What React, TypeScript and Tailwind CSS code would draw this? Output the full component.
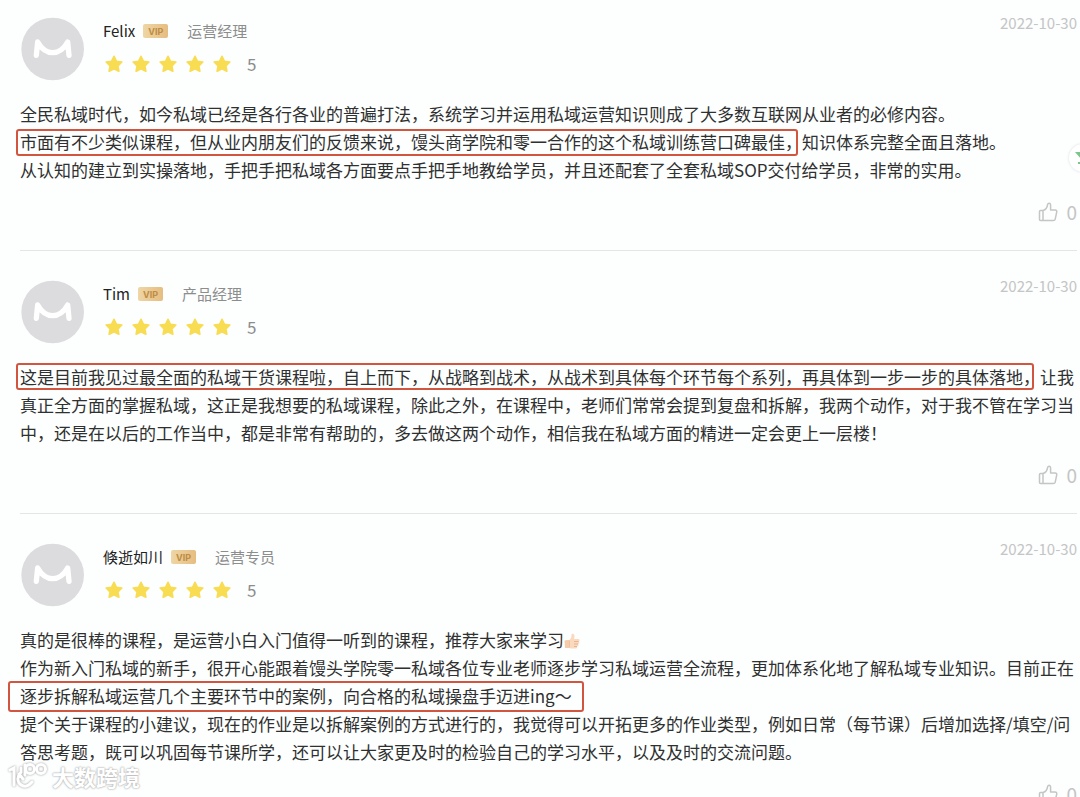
import React from "react";

type Review = {
  name: string;
  role: string;
  date: string;
  score: number;
  likes: number;
  body: React.ReactNode;
};

function Boxed({ edge, children }: { edge: string; children: React.ReactNode }) {
  return (
    <span className="relative">
      {children}
      <span aria-hidden="true" className={`pointer-events-none absolute rounded-[3px] border-2 border-[#d2553f] ${edge}`} />
    </span>
  );
}

function ThumbEmoji() {
  return (
    <svg role="img" aria-label="点赞" viewBox="0 0 32 32" className="inline-block size-4 align-[-2px]">
      <path d="M10 15c4-3 5-7 5-11 0-4 6-3 6 2 0 3-1 5-1 6h8c4 0 4 5 1 5 3 1 2 5-1 5 2 1 1 5-2 5 1 2 0 4-3 4H13l-3-2z" fill="#fad9bd" />
      <path d="M20 17h9M20 22h8M20 27h6" stroke="#dfa987" strokeWidth="1.5" fill="none" />
      <path d="M1 15c4-1 7-1 10-1v16H2z" fill="#f6cba9" />
      <path d="M11 15v14" stroke="#e3b08f" strokeWidth="1" />
    </svg>
  );
}

const reviews: Review[] = [
  {
    name: "Felix",
    role: "运营经理",
    date: "2022-10-30",
    score: 5,
    likes: 0,
    body: (
      <>
        <p>全民私域时代，如今私域已经是各行各业的普遍打法，系统学习并运用私域运营知识则成了大多数互联网从业者的必修内容。</p>
        <p>
          <Boxed edge="top-0 -bottom-0.5 -left-1 right-1">市面有不少类似课程，但从业内朋友们的反馈来说，馒头商学院和零一合作的这个私域训练营口碑最佳，</Boxed>
          知识体系完整全面且落地。
        </p>
        <p>从认知的建立到实操落地，手把手把私域各方面要点手把手地教给学员，并且还配套了全套私域SOP交付给学员，非常的实用。</p>
      </>
    ),
  },
  {
    name: "Tim",
    role: "产品经理",
    date: "2022-10-30",
    score: 5,
    likes: 0,
    body: (
      <p>
        <Boxed edge="-top-px -bottom-px -left-1 right-1.5">这是目前我见过最全面的私域干货课程啦，自上而下，从战略到战术，从战术到具体每个环节每个系列，再具体到一步一步的具体落地，</Boxed>
        让我真正全方面的掌握私域，这正是我想要的私域课程，除此之外，在课程中，老师们常常会提到复盘和拆解，我两个动作，对于我不管在学习当中，还是在以后的工作当中，都是非常有帮助的，多去做这两个动作，相信我在私域方面的精进一定会更上一层楼！
      </p>
    ),
  },
  {
    name: "倏逝如川",
    role: "运营专员",
    date: "2022-10-30",
    score: 5,
    likes: 0,
    body: (
      <>
        <p>
          真的是很棒的课程，是运营小白入门值得一听到的课程，推荐大家来学习
          <ThumbEmoji />
        </p>
        <p>
          作为新入门私域的新手，很开心能跟着馒头学院零一私域各位专业老师逐步学习私域运营全流程，更加体系化地了解私域专业知识。目前正在
          <Boxed edge="-top-0.5 -bottom-1 -left-3 -right-3">逐步拆解私域运营几个主要环节中的案例，向合格的私域操盘手迈进ing～</Boxed>
        </p>
        <p>提个关于课程的小建议，现在的作业是以拆解案例的方式进行的，我觉得可以开拓更多的作业类型，例如日常（每节课）后增加选择/填空/问答思考题，既可以巩固每节课所学，还可以让大家更及时的检验自己的学习水平，以及及时的交流问题。</p>
      </>
    ),
  },
];

function Avatar() {
  return (
    <svg aria-hidden="true" viewBox="0 0 192 192" className="size-16 shrink-0">
      <circle cx="98" cy="96" r="94" fill="#dcdcde" />
      <path
        d="M49 115L53 75Q71 107 98 107T143 75L147 115"
        fill="none"
        stroke="#fff"
        strokeWidth="16"
        strokeLinecap="round"
        strokeLinejoin="round"
      />
    </svg>
  );
}

function Star() {
  return (
    <svg aria-hidden="true" viewBox="0 0 24 24" className="size-5">
      <path
        d="M12 2.8l2.9 5.9 6.5.9-4.7 4.6 1.1 6.5-5.8-3.1-5.8 3.1 1.1-6.5-4.7-4.6 6.5-.9z"
        fill="#f8dc52"
        stroke="#f8dc52"
        strokeWidth="2"
        strokeLinejoin="round"
      />
    </svg>
  );
}

function ThumbIcon() {
  return (
    <svg aria-hidden="true" viewBox="0 0 20 20" className="size-5" fill="none" stroke="currentColor" strokeWidth="1.5" strokeLinejoin="round" strokeLinecap="round">
      <path d="M5 8.5H2.500q-1 0-1 1V17.500q0 1 1 1H15.400q1.400 0 1.800-1.300l1.500-7.100q.4-2.200-1.800-2.200H12.600V3.500q0-2.200-1.500-2.200-1.300 0-1.600 1.600Q9 7.400 5 8.500V18.500" />
    </svg>
  );
}

function ReviewItem({ review }: { review: Review }) {
  return (
    <article className="border-b border-[#e4e5e5] pt-[29px] pb-[26px] first:pt-[17px] last:border-b-0">
      <header className="flex items-start">
        <Avatar />
        <div className="ml-[19px] flex-1">
          <div className="flex h-7 items-center text-[15px] leading-7">
            <h2 className="text-[#222]">{review.name}</h2>
            <span className="mr-[19px] ml-2 flex h-[14px] w-[25px] items-center justify-center rounded-xs bg-linear-to-r from-[#eed6a6] to-[#e6bd80] font-['Inter'] text-[9px] leading-none font-bold text-[#bd8c45]">
              VIP
            </span>
            <span className="text-[#8c8d8d]">{review.role}</span>
          </div>
          <div className="mt-[5px] flex h-7 items-center gap-[7px] pl-px">
            {Array.from({ length: review.score }, (_, i) => (
              <Star key={i} />
            ))}
            <span className="ml-2 text-[17px] text-[#8c8d8d]">{review.score}</span>
          </div>
        </div>
        <time dateTime={review.date} className="text-[15px] leading-3 text-[#c4c5c5]">
          {review.date}
        </time>
      </header>
      <div className="mt-[19px] text-[17px] leading-7 text-[#2f3030]">{review.body}</div>
      <div className="mt-4 flex justify-end">
        <button type="button" aria-label="赞" className="flex items-center gap-2 text-[19px] leading-6 text-[#c4c5c5]">
          <ThumbIcon />
          {review.likes}
        </button>
      </div>
    </article>
  );
}

function Watermark() {
  return (
    <div className="absolute bottom-[7px] left-2 flex items-center gap-1 text-[22px] leading-7 font-bold text-white [text-shadow:0_0_2px_#aaa,0_0_2px_#bbb]">
      <svg aria-hidden="true" viewBox="0 0 40 28" className="h-7 w-10 drop-shadow-[0_0_1px_#999]" fill="none" stroke="#fff" strokeWidth="3" strokeLinecap="round">
        <path d="M2 8L6 6V23M13 6V10Q8 16 11 21Q17 28 24 20M11 12L15 17" />
        <circle cx="22" cy="7" r="4.500" />
        <circle cx="33" cy="7" r="4.500" />
        <path d="M17 3V13" />
      </svg>
      大数跨境
    </div>
  );
}

export default function App() {
  return (
    <div className="relative h-screen overflow-hidden bg-[#fdfefe] font-['Noto_Sans_CJK_SC',sans-serif]">
      <main className="pr-[3px] pl-5">
        {reviews.map((review) => (
          <ReviewItem key={review.name} review={review} />
        ))}
      </main>
      <button type="button" aria-label="客服" className="absolute top-36 -right-[17px] size-7 rounded-full bg-white shadow-[0_0_3px_#ddd]">
        <svg aria-hidden="true" viewBox="0 0 28 28" className="size-7">
          <path d="M6 8h16l-8 9zM9 18h10v2H9z" fill="#7cc68a" />
        </svg>
      </button>
      <Watermark />
    </div>
  );
}
